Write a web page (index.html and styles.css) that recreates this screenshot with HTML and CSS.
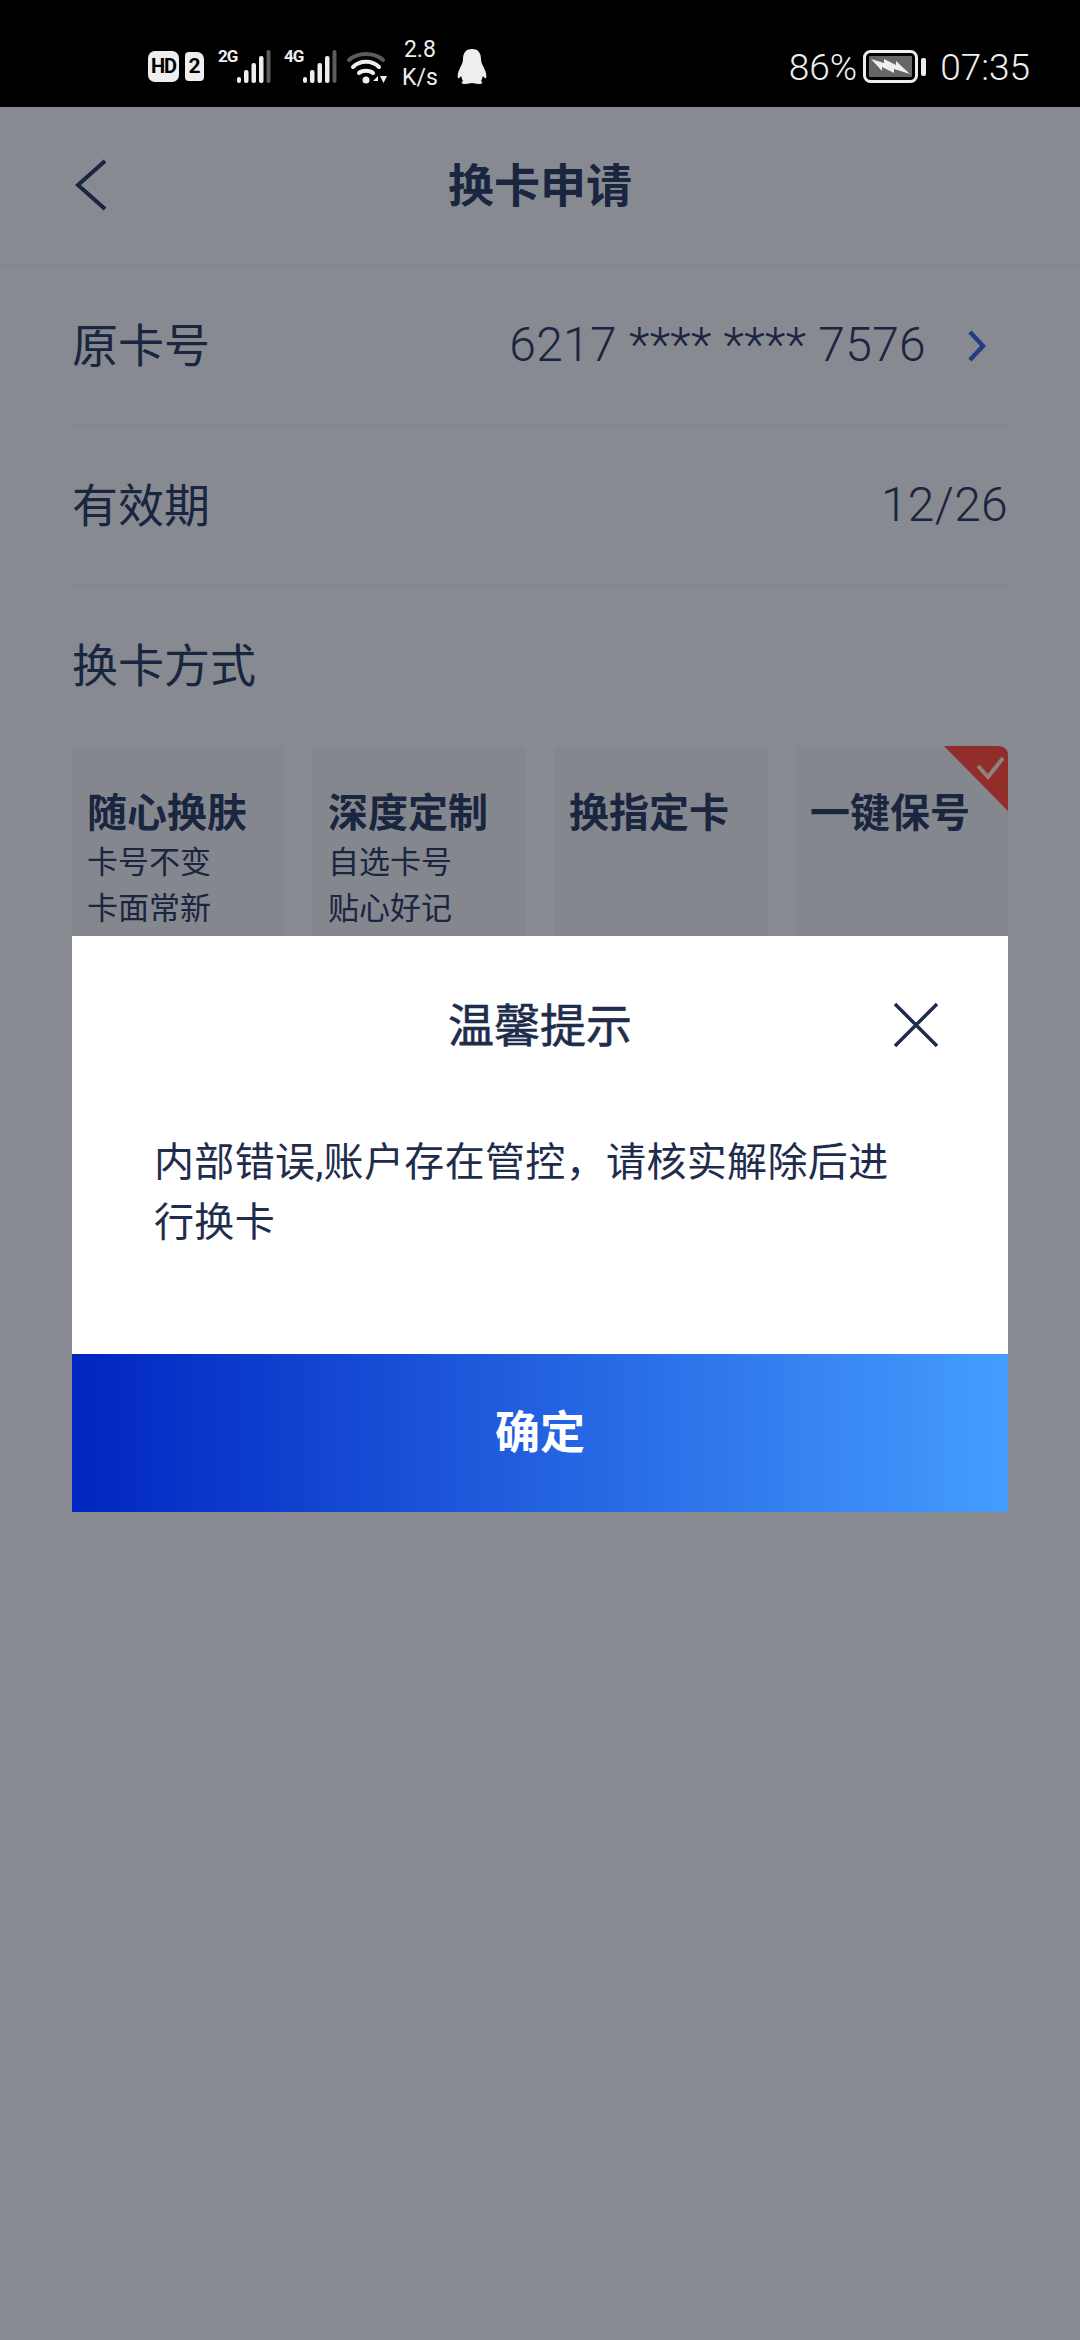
FILE: index.html
```html
<!DOCTYPE html>
<html lang="zh-CN">
<head>
    <meta charset="UTF-8">
    <meta name="viewport" content="width=device-width, initial-scale=1.0">
    <title>换卡申请</title>
    <link rel="stylesheet" href="styles.css">
</head>
<body>
    <div class="status-bar">
        <div class="status-left">
            <span class="hd-badge">HD</span>
            <span class="sim-badge">2</span>
            <div class="signal signal-first">
                <span class="signal-label">2G</span>
                <svg width="36" height="34" viewBox="0 0 36 34">
                    <rect x="1" y="27" width="4" height="6" rx="2" fill="#eee"/>
                    <rect x="8" y="20" width="4.5" height="13" rx="2" fill="#eee"/>
                    <rect x="15.500" y="13" width="4.500" height="20" rx="2" fill="#eee"/>
                    <rect x="23" y="6" width="4.500" height="27" rx="2" fill="#eee"/>
                    <rect x="30.500" y="0" width="4" height="33" rx="2" fill="#5c5c5c"/>
                </svg>
            </div>
            <div class="signal">
                <span class="signal-label">4G</span>
                <svg width="36" height="34" viewBox="0 0 36 34">
                    <rect x="1" y="27" width="4" height="6" rx="2" fill="#eee"/>
                    <rect x="8" y="20" width="4.5" height="13" rx="2" fill="#eee"/>
                    <rect x="15.500" y="13" width="4.500" height="20" rx="2" fill="#eee"/>
                    <rect x="23" y="6" width="4.500" height="27" rx="2" fill="#eee"/>
                    <rect x="30.500" y="0" width="4" height="33" rx="2" fill="#5c5c5c"/>
                </svg>
            </div>
            <svg class="wifi" width="42" height="34" viewBox="0 0 42 34">
                <path d="M2 10 C11 2 27 2 36 10" fill="none" stroke="#5c5c5c" stroke-width="4" stroke-linecap="round"/>
                <path d="M6 17 C13 10 25 10 32 17" fill="none" stroke="#eee" stroke-width="4" stroke-linecap="round"/>
                <path d="M12 23 C15 20 23 20 26 23" fill="none" stroke="#eee" stroke-width="4" stroke-linecap="round"/>
                <circle cx="19" cy="30" r="3.500" fill="#eee"/>
                <path d="M30 27 L26 31 H31 V26 Z M33 26 H40 L36.500 33 Z" fill="#eee"/>
            </svg>
            <div class="net-speed"><span>2.8</span><span>K/s</span></div>
            <svg class="penguin" width="30" height="36" viewBox="0 0 30 36">
                <path d="M15 0 C8 0 6 5 6 10 C6 13 5 15 3 19 C1 23 0 27 1 29 C2 30 3 28 4 27 C5 29 5 31 6 32 C4 33 4 35 8 35 C11 35 13 34 15 34 C17 34 19 35 22 35 C26 35 26 33 24 32 C25 31 25 29 26 27 C27 28 28 30 29 29 C30 27 29 23 27 19 C25 15 24 13 24 10 C24 5 22 0 15 0 Z" fill="#eee"/>
            </svg>
        </div>
        <div class="status-right">
            <span class="battery-pct">86%</span>
            <svg class="battery" width="64" height="34" viewBox="0 0 64 34">
                <rect x="1.500" y="1.500" width="52" height="30" rx="6" fill="none" stroke="#eee" stroke-width="3"/>
                <rect x="6" y="6" width="43" height="21" rx="1" fill="#666"/>
                <path d="M8 9 L21 13 L21 9 L33 15 L33 11 L47 24 L31 19 L31 23 L19 17 L19 21 Z" fill="#eee"/>
                <rect x="58" y="8" width="5" height="18" rx="2" fill="#eee"/>
            </svg>
            <span class="clock">07:35</span>
        </div>
    </div>

    <div class="page">
        <div class="nav-bar">
            <svg class="back-icon" width="34" height="52" viewBox="0 0 34 52">
                <path d="M31 2 L4 26 L31 50" fill="none" stroke="#2f416f" stroke-width="4"/>
            </svg>
            <h1 class="nav-title">换卡申请</h1>
        </div>
        <div class="form">
            <div class="form-row">
                <span class="row-label">原卡号</span>
                <span class="row-value">6217 **** **** 7576</span>
                <svg class="row-arrow" width="20" height="34" viewBox="0 0 20 34">
                    <path d="M4 3 L17 17 L4 31" fill="none" stroke="#3a6ce8" stroke-width="4.500"/>
                </svg>
            </div>
            <div class="form-row">
                <span class="row-label">有效期</span>
                <span class="row-value">12/26</span>
            </div>
            <div class="form-row no-line">
                <span class="row-label">换卡方式</span>
            </div>
        </div>
        <div class="card-grid">
            <div class="type-card">
                <div class="type-name">随心换肤</div>
                <div class="type-desc">卡号不变</div>
                <div class="type-desc">卡面常新</div>
            </div>
            <div class="type-card">
                <div class="type-name">深度定制</div>
                <div class="type-desc">自选卡号</div>
                <div class="type-desc">贴心好记</div>
            </div>
            <div class="type-card">
                <div class="type-name">换指定卡</div>
            </div>
            <div class="type-card">
                <svg class="card-check" width="64" height="65" viewBox="0 0 64 65">
                    <path d="M0 0 H54 Q64 0 64 10 V65 Z" fill="#ff4f4b"/>
                    <path d="M34 20 L44 31 L59 12" fill="none" stroke="#fff" stroke-opacity="0.85" stroke-width="4"/>
                </svg>
                <div class="type-name">一键保号</div>
            </div>
        </div>
    </div>

    <div class="overlay">
        <div class="dialog">
            <div class="dialog-head">
                <h2 class="dialog-title">温馨提示</h2>
                <svg class="dialog-close" width="46" height="46" viewBox="0 0 46 46">
                    <path d="M2 2 L44 44 M44 2 L2 44" fill="none" stroke="#1f2d4d" stroke-width="3.500"/>
                </svg>
            </div>
            <p class="dialog-text">内部错误,账户存在管控，请核实解除后进行换卡</p>
            <button class="dialog-btn">确定</button>
        </div>
    </div>
</body>
</html>
```
FILE: styles.css
```css
* {
    margin: 0;
    padding: 0;
    box-sizing: border-box;
    font-family: Roboto, "Noto Sans CJK SC", sans-serif;
}
body {
    position: relative;
    width: 1080px;
    height: 2340px;
    overflow: hidden;
    background: #edf2ff;
}

/* status bar */
.status-bar {
    display: flex;
    justify-content: space-between;
    align-items: center;
    height: 107px;
    padding: 0 50px 0 148px;
    background: #000;
    color: #eee;
}
.status-left {
    display: flex;
    align-items: center;
    padding-top: 26px;
}
.status-right {
    display: flex;
    align-items: center;
    padding-top: 27px;
}
.hd-badge {
    width: 31px;
    height: 31px;
    border-radius: 7px;
    background: #eee;
    color: #000;
    font-size: 20px;
    font-weight: 700;
    line-height: 31px;
    text-align: center;
    letter-spacing: -1px;
}
.sim-badge {
    width: 19px;
    height: 29px;
    margin-left: 6px;
    border-radius: 4px 7px 4px 4px;
    background: #eee;
    color: #000;
    font-size: 21px;
    font-weight: 700;
    line-height: 29px;
    text-align: center;
}
.signal {
    display: flex;
    align-items: flex-end;
    margin-left: 12px;
    height: 34px;
}
.signal-first {
    margin-left: 14px;
}
.signal-label {
    align-self: flex-start;
    width: 18px;
    margin-top: -3px;
    font-size: 17px;
    font-weight: 700;
    line-height: 18px;
    letter-spacing: -1px;
}
.wifi {
    margin-left: 9px;
}
.net-speed {
    display: flex;
    flex-direction: column;
    align-items: center;
    margin-left: 13px;
    margin-top: -6px;
    font-size: 23px;
    line-height: 28px;
}
.penguin {
    margin-left: 19px;
}
.battery-pct {
    font-size: 37px;
    font-weight: 300;
}
.battery {
    margin-left: 6px;
}
.clock {
    margin-left: 13px;
    font-size: 37px;
    font-weight: 300;
}

/* page behind the dialog */
.nav-bar {
    position: relative;
    display: flex;
    align-items: center;
    justify-content: center;
    height: 159px;
    border-bottom: 1px solid #e4e8f4;
}
.back-icon {
    position: absolute;
    left: 74px;
    top: 52px;
}
.nav-title {
    padding-bottom: 8px;
    font-size: 46px;
    font-weight: 700;
    color: #2f416f;
}
.form {
    padding: 0 72px;
}
.form-row {
    display: flex;
    align-items: center;
    justify-content: space-between;
    height: 160px;
    border-bottom: 1px solid #e4e8f4;
    color: #2f416f;
    font-size: 46px;
}
.no-line {
    border-bottom: none;
}
.row-label {
    flex: 1;
    padding-bottom: 8px;
}
.row-value {
    padding-bottom: 2px;
    font-size: 48px;
    font-weight: 300;
    letter-spacing: 0.3px;
}
.row-arrow {
    margin: 0 22px 0 40px;
}
.card-grid {
    display: grid;
    grid-template-columns: repeat(4, 213px);
    gap: 28px;
    padding: 0 72px;
}
.type-card {
    position: relative;
    height: 300px;
    padding: 41px 15px 0;
    border-radius: 8px;
    background: #e9edfa;
    color: #2f416f;
}
.card-check {
    position: absolute;
    top: 0;
    right: 0;
}
.type-name {
    font-size: 40px;
    font-weight: 700;
    line-height: 53px;
}
.type-desc {
    font-size: 31px;
    line-height: 46px;
}

/* dialog */
.overlay {
    position: absolute;
    top: 107px;
    left: 0;
    right: 0;
    bottom: 0;
    padding: 829px 72px 0;
    background: rgba(0, 0, 0, 0.43);
}
.dialog {
    display: flex;
    flex-direction: column;
    background: #fff;
}
.dialog-head {
    position: relative;
    display: flex;
    align-items: center;
    justify-content: center;
    height: 197px;
    padding-bottom: 25px;
}
.dialog-title {
    font-size: 46px;
    font-weight: 400;
    color: #1f2d4d;
    -webkit-text-stroke: 0.6px #1f2d4d;
}
.dialog-close {
    position: absolute;
    top: 66px;
    right: 69px;
}
.dialog-text {
    width: 750px;
    height: 221px;
    margin-left: 82px;
    color: #1f2d4d;
    font-size: 40px;
    line-height: 60px;
    letter-spacing: 0.35px;
}
.dialog-btn {
    height: 158px;
    padding-bottom: 8px;
    border: none;
    background: linear-gradient(to right, #0025c0, #459dff);
    color: #fff;
    font-size: 45px;
    font-weight: 700;
}
```
